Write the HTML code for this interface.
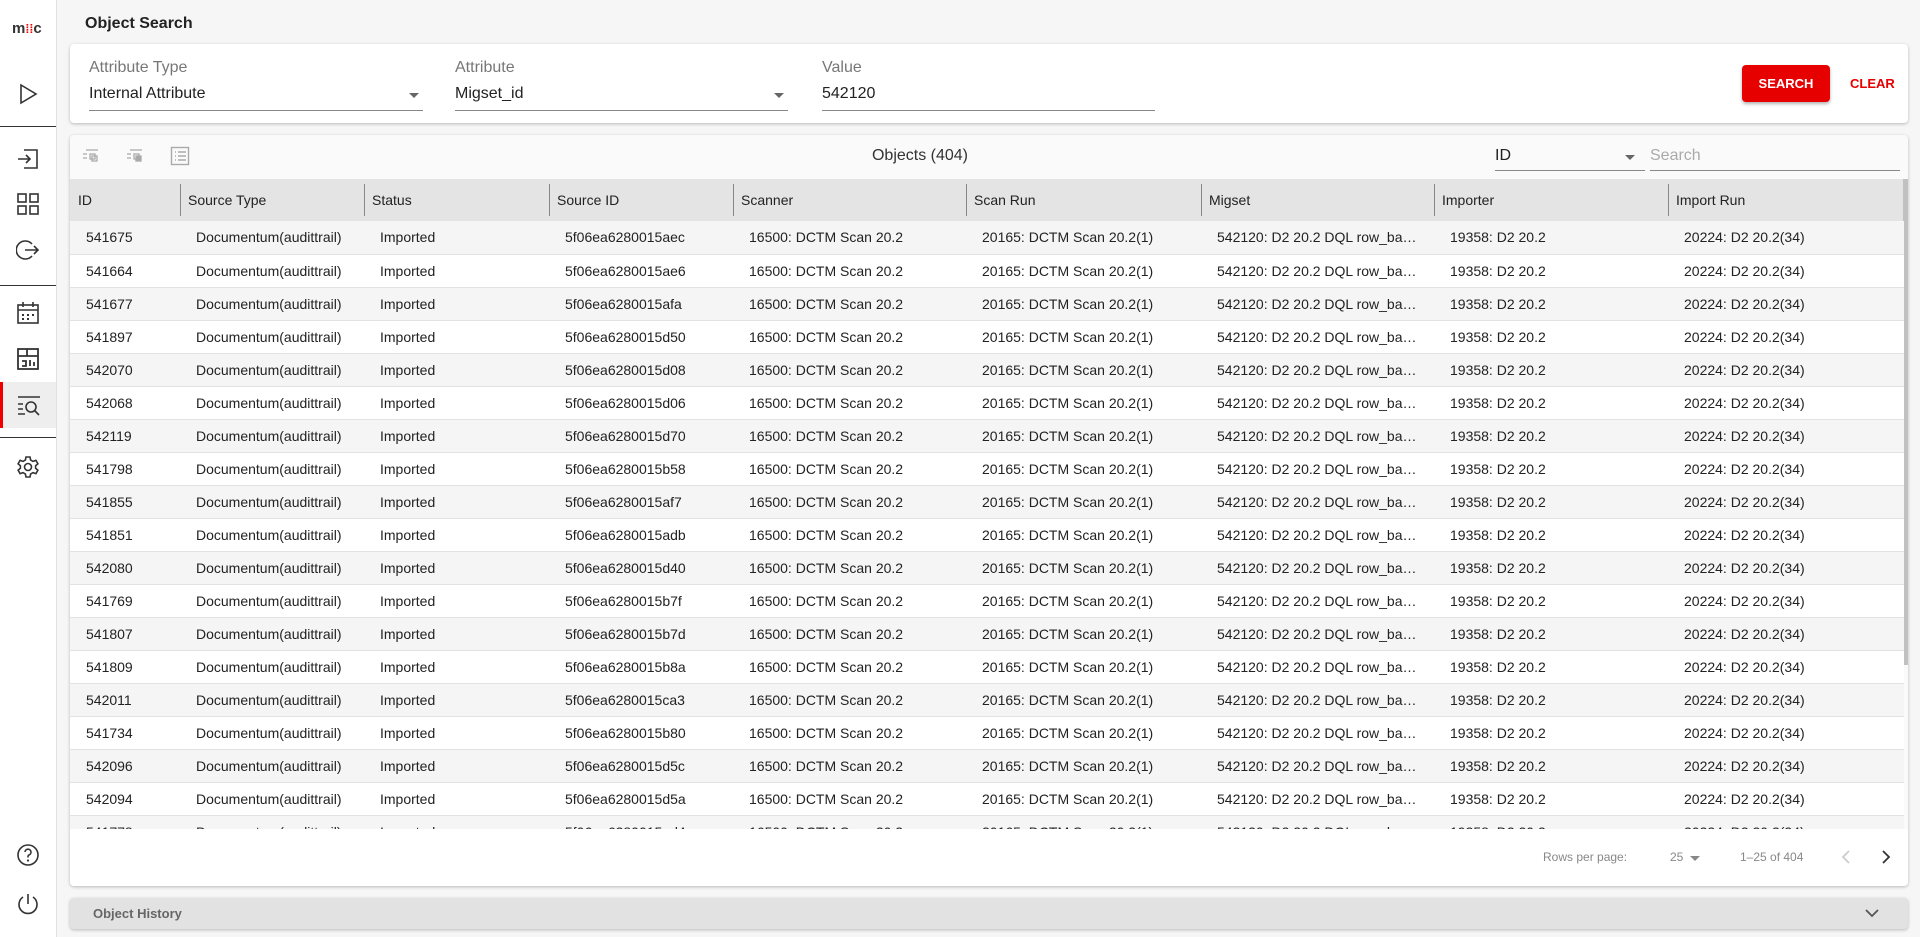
<!DOCTYPE html>
<html><head><meta charset="utf-8"><style>
*{box-sizing:border-box;margin:0;padding:0}
body{width:1920px;height:937px;overflow:hidden;background:#f6f6f6;font-family:"Liberation Sans",sans-serif;color:#222;position:relative}
.side{position:absolute;left:0;top:0;width:57px;height:937px;background:#fff;border-right:1px solid #e2e2e2}
.side .ic{position:absolute;left:16px;width:24px;height:24px}
.side .dv{position:absolute;left:0;width:56px;height:1px;background:#333}
.title{position:absolute;left:85px;top:15px;font-size:16px;font-weight:bold;color:#222}
.card{position:absolute;background:#fff;border-radius:4px;box-shadow:0 1px 3px rgba(0,0,0,.25)}
.fld{position:absolute;top:0}
.fld .lb{position:absolute;top:15px;font-size:16px;color:#777;white-space:nowrap}
.fld .vl{position:absolute;top:41px;font-size:16px;color:#222;white-space:nowrap}
.fld .ul{position:absolute;top:66px;left:0;height:1px;background:#888}
.arrow{position:absolute;width:0;height:0;border-left:5px solid transparent;border-right:5px solid transparent;border-top:5px solid #666}
table{border-collapse:collapse;table-layout:fixed;font-size:14px}
td{height:33px;border-bottom:1px solid #e2e2e2;white-space:nowrap;overflow:hidden;text-overflow:ellipsis;padding-left:16px;padding-right:14px;color:#222}
tr:nth-child(odd) td{background:#f5f5f5}
tr:nth-child(even) td{background:#fff}
.hd{position:absolute;left:0;top:44px;height:42px;width:1834px;background:#e4e4e4;font-size:14px}
.hd div{position:absolute;top:0;height:42px;line-height:42px;padding-left:8px;white-space:nowrap}
.hd span{position:absolute;top:5px;width:1px;height:32px;background:#888}
</style></head><body>
<div class="side">
  <div style="position:absolute;left:12px;top:20px;font-size:15px;font-weight:bold;color:#333">m<span style="color:#e00;font-size:12px">⁞⁞</span>c</div>
  <svg class="ic" style="top:82px" viewBox="0 0 24 24"><path d="M5 3 L20 12 L5 21 Z" fill="none" stroke="#333" stroke-width="1.6"/></svg>
  <div class="dv" style="top:126px"></div>
  <svg class="ic" style="top:147px" viewBox="0 0 24 24"><path d="M8 3h13v18H8M2 12h12M10 8l4 4-4 4" fill="none" stroke="#333" stroke-width="1.6"/></svg>
  <svg class="ic" style="top:192px" viewBox="0 0 24 24"><g fill="none" stroke="#333" stroke-width="1.6"><rect x="2" y="2" width="8" height="8"/><rect x="14" y="2" width="8" height="8"/><rect x="2" y="14" width="8" height="8"/><rect x="14" y="14" width="8" height="8"/></g></svg>
  <svg class="ic" style="top:238px" viewBox="0 0 24 24"><path d="M16 6A9 9 0 1 0 16 18M9 12h13M18 8l4 4-4 4" fill="none" stroke="#333" stroke-width="1.6"/></svg>
  <div class="dv" style="top:285px"></div>
  <svg class="ic" style="top:301px" viewBox="0 0 24 24"><g fill="none" stroke="#333" stroke-width="1.6"><rect x="2" y="4" width="20" height="18"/><path d="M2 9h20M7 1v5M17 1v5"/></g><g fill="#333"><rect x="6" y="13" width="2" height="2"/><rect x="11" y="13" width="2" height="2"/><rect x="16" y="13" width="2" height="2"/><rect x="6" y="17" width="2" height="2"/><rect x="11" y="17" width="2" height="2"/></g></svg>
  <svg class="ic" style="top:347px" viewBox="0 0 24 24"><g fill="none" stroke="#333" stroke-width="1.8"><rect x="2" y="2" width="20" height="20"/><path d="M2 9h20M11 2v7M6 14h4v5H6M14 13v6M18 15v4"/></g></svg>
  <div style="position:absolute;left:0;top:382px;width:56px;height:46px;background:#eee"></div>
  <div style="position:absolute;left:0;top:382px;width:3px;height:46px;background:#e00"></div>
  <svg class="ic" style="top:393px" viewBox="0 0 24 24"><g fill="none" stroke="#333" stroke-width="1.6"><path d="M2 4h22M2 11h5M2 16h5M2 21h7"/><circle cx="15" cy="14" r="5"/><path d="M19 18l4 4"/></g></svg>
  <div class="dv" style="top:437px"></div>
  <svg class="ic" style="top:455px" viewBox="0 0 24 24"><g fill="none" stroke="#333" stroke-width="1.6"><circle cx="12" cy="12" r="3.5"/><path d="M10 2h4l.6 3 2.4 1.4 2.9-1 2 3.4-2.3 2v2.4l2.3 2-2 3.4-2.9-1-2.4 1.4-.6 3h-4l-.6-3-2.4-1.4-2.9 1-2-3.4 2.3-2v-2.4l-2.3-2 2-3.4 2.9 1 2.4-1.4z"/></g></svg>
  <svg class="ic" style="top:843px" viewBox="0 0 24 24"><g fill="none" stroke="#333" stroke-width="1.6"><circle cx="12" cy="12" r="10"/><path d="M9 9a3 3 0 1 1 4 3c-1 .5-1 1-1 2.5"/></g><circle cx="12" cy="17.5" r="1.1" fill="#333"/></svg>
  <svg class="ic" style="top:892px" viewBox="0 0 24 24"><g fill="none" stroke="#333" stroke-width="1.6"><path d="M12 2v10M7 5a9 9 0 1 0 10 0"/></g></svg>
</div>

<div class="title">Object Search</div>

<div class="card" style="left:70px;top:44px;width:1838px;height:79px">
  <div class="fld" style="left:19px"><div class="lb">Attribute Type</div><div class="vl">Internal Attribute</div><div class="ul" style="width:334px"></div><div class="arrow" style="left:320px;top:49px"></div></div>
  <div class="fld" style="left:385px"><div class="lb">Attribute</div><div class="vl">Migset_id</div><div class="ul" style="width:333px"></div><div class="arrow" style="left:319px;top:49px"></div></div>
  <div class="fld" style="left:752px"><div class="lb">Value</div><div class="vl">542120</div><div class="ul" style="width:333px"></div></div>
  <div style="position:absolute;left:1672px;top:21px;width:88px;height:37px;background:#e60000;border-radius:4px;box-shadow:0 2px 3px rgba(0,0,0,.3);color:#fff;font-size:13px;font-weight:bold;line-height:37px;text-align:center">SEARCH</div>
  <div style="position:absolute;left:1780px;top:21px;line-height:37px;color:#e60000;font-size:13px;font-weight:bold">CLEAR</div>
</div>

<div class="card" style="left:70px;top:135px;width:1838px;height:751px;background:#fafafa;overflow:hidden">
  <svg style="position:absolute;left:12px;top:13px" width="18" height="16" viewBox="0 0 18 16"><g fill="none" stroke="#aaa" stroke-width="1.3"><path d="M4 2h12M1 6h4M1 10h4"/><rect x="8" y="6" width="5" height="5"/><rect x="10" y="8" width="5" height="5"/></g></svg>
  <svg style="position:absolute;left:56px;top:13px" width="18" height="16" viewBox="0 0 18 16"><g stroke="#aaa" stroke-width="1.3"><path d="M4 2h12M1 6h4M1 10h4" fill="none"/><rect x="8" y="6" width="5" height="5" fill="none"/><rect x="10" y="8" width="5" height="5" fill="#aaa"/></g></svg>
  <svg style="position:absolute;left:100px;top:11px" width="20" height="20" viewBox="0 0 20 20"><g fill="none" stroke="#aaa" stroke-width="1.4"><rect x="1.5" y="1.5" width="17" height="17"/><path d="M5 6h1M8 6h8M5 10h1M8 10h8M5 14h1M8 14h8"/></g></svg>
  <div style="position:absolute;left:0;width:1700px;text-align:center;top:12px;font-size:16px;color:#333">Objects (404)</div>
  <div style="position:absolute;left:1425px;top:12px;font-size:16px">ID</div>
  <div class="arrow" style="left:1555px;top:20px"></div>
  <div style="position:absolute;left:1425px;top:35px;width:150px;height:1px;background:#888"></div>
  <div style="position:absolute;left:1580px;top:12px;font-size:16px;color:#aaa">Search</div>
  <div style="position:absolute;left:1580px;top:35px;width:250px;height:1px;background:#888"></div>

  <div class="hd">
    <div style="left:0">ID</div><span style="left:110px"></span>
    <div style="left:110px">Source Type</div><span style="left:294px"></span>
    <div style="left:294px">Status</div><span style="left:479px"></span>
    <div style="left:479px">Source ID</div><span style="left:663px"></span>
    <div style="left:663px">Scanner</div><span style="left:896px"></span>
    <div style="left:896px">Scan Run</div><span style="left:1131px"></span>
    <div style="left:1131px">Migset</div><span style="left:1364px"></span>
    <div style="left:1364px">Importer</div><span style="left:1598px"></span>
    <div style="left:1598px">Import Run</div>
  </div>
  <div style="position:absolute;left:1833px;top:44px;width:5px;height:486px;background:#c1c1c1"></div>
  <div style="position:absolute;left:0;top:86px;width:1834px;height:608px;overflow:hidden">
  <table style="width:1834px">
  <colgroup><col style="width:110px"><col style="width:184px"><col style="width:185px"><col style="width:184px"><col style="width:233px"><col style="width:235px"><col style="width:233px"><col style="width:234px"><col style="width:236px"></colgroup>
  <tbody>
<tr><td>541675</td><td>Documentum(audittrail)</td><td>Imported</td><td>5f06ea6280015aec</td><td>16500: DCTM Scan 20.2</td><td>20165: DCTM Scan 20.2(1)</td><td>542120: D2 20.2 DQL row_based</td><td>19358: D2 20.2</td><td>20224: D2 20.2(34)</td></tr>
<tr><td>541664</td><td>Documentum(audittrail)</td><td>Imported</td><td>5f06ea6280015ae6</td><td>16500: DCTM Scan 20.2</td><td>20165: DCTM Scan 20.2(1)</td><td>542120: D2 20.2 DQL row_based</td><td>19358: D2 20.2</td><td>20224: D2 20.2(34)</td></tr>
<tr><td>541677</td><td>Documentum(audittrail)</td><td>Imported</td><td>5f06ea6280015afa</td><td>16500: DCTM Scan 20.2</td><td>20165: DCTM Scan 20.2(1)</td><td>542120: D2 20.2 DQL row_based</td><td>19358: D2 20.2</td><td>20224: D2 20.2(34)</td></tr>
<tr><td>541897</td><td>Documentum(audittrail)</td><td>Imported</td><td>5f06ea6280015d50</td><td>16500: DCTM Scan 20.2</td><td>20165: DCTM Scan 20.2(1)</td><td>542120: D2 20.2 DQL row_based</td><td>19358: D2 20.2</td><td>20224: D2 20.2(34)</td></tr>
<tr><td>542070</td><td>Documentum(audittrail)</td><td>Imported</td><td>5f06ea6280015d08</td><td>16500: DCTM Scan 20.2</td><td>20165: DCTM Scan 20.2(1)</td><td>542120: D2 20.2 DQL row_based</td><td>19358: D2 20.2</td><td>20224: D2 20.2(34)</td></tr>
<tr><td>542068</td><td>Documentum(audittrail)</td><td>Imported</td><td>5f06ea6280015d06</td><td>16500: DCTM Scan 20.2</td><td>20165: DCTM Scan 20.2(1)</td><td>542120: D2 20.2 DQL row_based</td><td>19358: D2 20.2</td><td>20224: D2 20.2(34)</td></tr>
<tr><td>542119</td><td>Documentum(audittrail)</td><td>Imported</td><td>5f06ea6280015d70</td><td>16500: DCTM Scan 20.2</td><td>20165: DCTM Scan 20.2(1)</td><td>542120: D2 20.2 DQL row_based</td><td>19358: D2 20.2</td><td>20224: D2 20.2(34)</td></tr>
<tr><td>541798</td><td>Documentum(audittrail)</td><td>Imported</td><td>5f06ea6280015b58</td><td>16500: DCTM Scan 20.2</td><td>20165: DCTM Scan 20.2(1)</td><td>542120: D2 20.2 DQL row_based</td><td>19358: D2 20.2</td><td>20224: D2 20.2(34)</td></tr>
<tr><td>541855</td><td>Documentum(audittrail)</td><td>Imported</td><td>5f06ea6280015af7</td><td>16500: DCTM Scan 20.2</td><td>20165: DCTM Scan 20.2(1)</td><td>542120: D2 20.2 DQL row_based</td><td>19358: D2 20.2</td><td>20224: D2 20.2(34)</td></tr>
<tr><td>541851</td><td>Documentum(audittrail)</td><td>Imported</td><td>5f06ea6280015adb</td><td>16500: DCTM Scan 20.2</td><td>20165: DCTM Scan 20.2(1)</td><td>542120: D2 20.2 DQL row_based</td><td>19358: D2 20.2</td><td>20224: D2 20.2(34)</td></tr>
<tr><td>542080</td><td>Documentum(audittrail)</td><td>Imported</td><td>5f06ea6280015d40</td><td>16500: DCTM Scan 20.2</td><td>20165: DCTM Scan 20.2(1)</td><td>542120: D2 20.2 DQL row_based</td><td>19358: D2 20.2</td><td>20224: D2 20.2(34)</td></tr>
<tr><td>541769</td><td>Documentum(audittrail)</td><td>Imported</td><td>5f06ea6280015b7f</td><td>16500: DCTM Scan 20.2</td><td>20165: DCTM Scan 20.2(1)</td><td>542120: D2 20.2 DQL row_based</td><td>19358: D2 20.2</td><td>20224: D2 20.2(34)</td></tr>
<tr><td>541807</td><td>Documentum(audittrail)</td><td>Imported</td><td>5f06ea6280015b7d</td><td>16500: DCTM Scan 20.2</td><td>20165: DCTM Scan 20.2(1)</td><td>542120: D2 20.2 DQL row_based</td><td>19358: D2 20.2</td><td>20224: D2 20.2(34)</td></tr>
<tr><td>541809</td><td>Documentum(audittrail)</td><td>Imported</td><td>5f06ea6280015b8a</td><td>16500: DCTM Scan 20.2</td><td>20165: DCTM Scan 20.2(1)</td><td>542120: D2 20.2 DQL row_based</td><td>19358: D2 20.2</td><td>20224: D2 20.2(34)</td></tr>
<tr><td>542011</td><td>Documentum(audittrail)</td><td>Imported</td><td>5f06ea6280015ca3</td><td>16500: DCTM Scan 20.2</td><td>20165: DCTM Scan 20.2(1)</td><td>542120: D2 20.2 DQL row_based</td><td>19358: D2 20.2</td><td>20224: D2 20.2(34)</td></tr>
<tr><td>541734</td><td>Documentum(audittrail)</td><td>Imported</td><td>5f06ea6280015b80</td><td>16500: DCTM Scan 20.2</td><td>20165: DCTM Scan 20.2(1)</td><td>542120: D2 20.2 DQL row_based</td><td>19358: D2 20.2</td><td>20224: D2 20.2(34)</td></tr>
<tr><td>542096</td><td>Documentum(audittrail)</td><td>Imported</td><td>5f06ea6280015d5c</td><td>16500: DCTM Scan 20.2</td><td>20165: DCTM Scan 20.2(1)</td><td>542120: D2 20.2 DQL row_based</td><td>19358: D2 20.2</td><td>20224: D2 20.2(34)</td></tr>
<tr><td>542094</td><td>Documentum(audittrail)</td><td>Imported</td><td>5f06ea6280015d5a</td><td>16500: DCTM Scan 20.2</td><td>20165: DCTM Scan 20.2(1)</td><td>542120: D2 20.2 DQL row_based</td><td>19358: D2 20.2</td><td>20224: D2 20.2(34)</td></tr>
<tr><td>541778</td><td>Documentum(audittrail)</td><td>Imported</td><td>5f06ea6280015ad4</td><td>16500: DCTM Scan 20.2</td><td>20165: DCTM Scan 20.2(1)</td><td>542120: D2 20.2 DQL row_based</td><td>19358: D2 20.2</td><td>20224: D2 20.2(34)</td></tr>
  </tbody></table></div>
  <div style="position:absolute;left:0;top:694px;width:1838px;height:57px;background:#fff"></div>
  <div style="position:absolute;left:1473px;top:715px;font-size:12px;color:#888">Rows per page:</div>
  <div style="position:absolute;left:1600px;top:715px;font-size:12px;color:#888">25</div>
  <div class="arrow" style="left:1620px;top:721px;border-top-color:#888"></div>
  <div style="position:absolute;left:1670px;top:715px;font-size:12px;color:#888">1–25 of 404</div>
  <svg style="position:absolute;left:1770px;top:714px" width="12" height="16" viewBox="0 0 12 16"><path d="M9 2L3 8l6 6" fill="none" stroke="#ccc" stroke-width="1.8"/></svg>
  <svg style="position:absolute;left:1810px;top:714px" width="12" height="16" viewBox="0 0 12 16"><path d="M3 2l6 6-6 6" fill="none" stroke="#333" stroke-width="1.8"/></svg>
</div>

<div class="card" style="left:70px;top:898px;width:1838px;height:31px;background:#e2e2e2;border-radius:4px">
  <div style="position:absolute;left:23px;top:8px;font-size:13px;font-weight:bold;color:#666">Object History</div>
  <svg style="position:absolute;left:1794px;top:9px" width="16" height="12" viewBox="0 0 16 12"><path d="M2 3l6 6 6-6" fill="none" stroke="#555" stroke-width="1.8"/></svg>
</div>
</body></html>
